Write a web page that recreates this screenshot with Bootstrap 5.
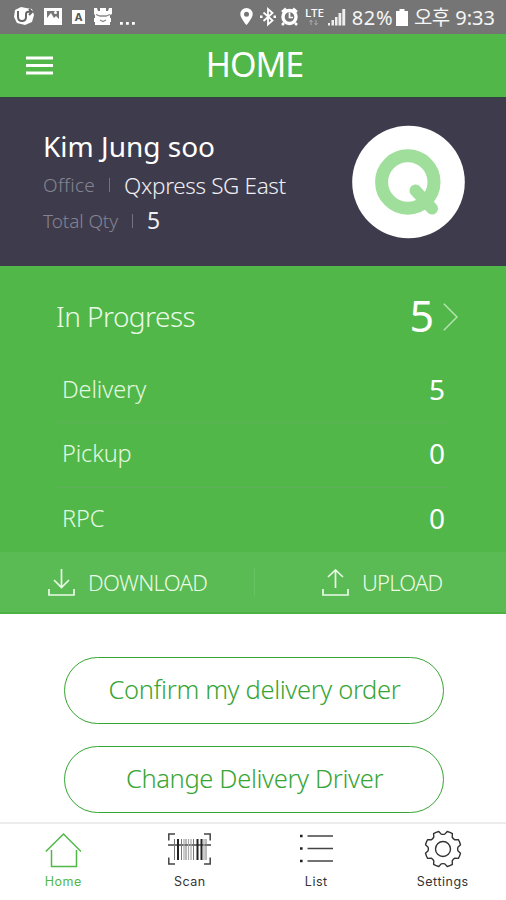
<!DOCTYPE html>
<html lang="en">
<head>
<meta charset="utf-8">
<meta name="viewport" content="width=device-width, initial-scale=1">
<title>Home</title>
<link href="https://cdn.jsdelivr.net/npm/bootstrap@5.3.0/dist/css/bootstrap.min.css" rel="stylesheet">
<style>
:root{--green:#50b748;--line-green:#37a534}
body{font-family:"Noto Sans","Noto Sans CJK KR",sans-serif;font-weight:340;background:#fff;line-height:1.2}
svg{display:block;flex:none}
.phone{width:506px;height:900px}
.status{height:34px;background:#757575;padding:2px 11px 0 13px;font-size:20px;font-weight:400;color:#f6f6f6}
.status svg{height:34px}
.topbar{height:63px;background:var(--green);padding:0 26px}
.topbar h1{font-size:34px;font-weight:400;letter-spacing:-1px;padding:0 24px 2px 0}
.profile{height:169px;background:#3e3c4c;border-top:1px solid #34433f;padding:0 41px 0 43px}
.who{font-size:28px;font-weight:400;height:40px;line-height:38px}
.info{height:36px;font-size:19px;color:#858391}
.info b{font-weight:340;color:#eeeef3}
.vr-thin{width:1px;height:14px;background:#74727f}
.progress-area{background:var(--green);color:#fff;height:286px}
.head-row{height:92px;padding:9px 48px 0 56px;font-size:28px}
.head-row .label{letter-spacing:-.55px;color:#eafae8}
.head-row .num{font-size:43px;font-weight:450;margin-right:9px;line-height:50px;padding-bottom:2px}
.rows{margin:0 58px 0 57px}
.item{height:64px;padding:0 3px 1px 5px;font-size:23.5px;letter-spacing:-.1px;color:#e4f7e1}
.item+.item{border-top:1px solid #5faf5b;height:65px;padding-bottom:3px}
.item .num{font-size:28px;font-weight:450;color:#fff}
.actions{height:62px;background:#5aba53;border-bottom:2px solid #4db245;color:#eafae8;font-size:22px}
.actions .divide{width:1px;height:28px;background:#68c462}
.pill{width:380px;height:67px;border:1px solid var(--line-green);color:var(--line-green);font-size:25.5px;letter-spacing:-.35px;font-weight:300;padding:0 0 2px 2px}
.tabs{height:78px;border-top:2px solid #ececec;background:#fff;font-family:Inter,sans-serif;font-size:12.5px;font-weight:400;letter-spacing:.5px;color:#333}
.tabs a{color:inherit;padding-top:5px}
.tabs .on{color:var(--green)}
.tabs span{line-height:18px;margin-top:4px}
</style>
</head>
<body>
<div class="phone d-flex flex-column overflow-hidden">
  <div class="status d-flex align-items-center">
    <svg width="22" viewBox="0 0 22 34"><path d="M2 9l6-3 5 1 6 1 2 6-2 7-7 3-8-2-3-6z" fill="#fff"/><path d="M5 10v6q0 4 4 4t4-4v-3q0-3 5-2M16 8l3 3-3 3" fill="none" stroke="#666" stroke-width="2"/></svg>
    <svg width="18" viewBox="0 0 18 34" style="margin-left:9px"><rect y="7" width="18" height="17" fill="#fff"/><path d="M3 10h12v8l-3-3-2 2-3-5-4 5z" fill="#777"/><circle cx="11.500" cy="11.500" r="1.500" fill="#fff"/></svg>
    <svg width="13" viewBox="0 0 13 34" style="margin-left:10px"><rect y="9" width="13" height="14" fill="#fff"/><text x="6.500" y="20" font-size="11" font-weight="700" text-anchor="middle" fill="#555">A</text></svg>
    <svg width="20" viewBox="0 0 20 34" style="margin-left:8px"><path d="M1 7h3l1 3h2V7h6v3h2l1-3h3v6l-2 1v3h1v4h-1v3H2v-3H1v-4h1v-3l-1-1z" fill="#fff"/><path d="M3 13.500l4 1.500h6l4-1.500M7 19l3 1.500 3-1.500" fill="none" stroke="#888" stroke-width="1.300"/></svg>
    <svg width="16" viewBox="0 0 16 34" style="margin-left:7px"><path d="M0 21h2.800v2.800H0zM6 21h2.800v2.800H6zM12 21h2.800v2.800H12z" fill="#fff"/></svg>
    <svg class="ms-auto" width="13" viewBox="0 0 13 34"><path d="M6.500 7a6.200 6.200 0 0 1 6.200 6.200C12.700 17 6.500 24 6.500 24S.3 17 .3 13.200A6.200 6.200 0 0 1 6.500 7zm0 3.700a2.500 2.500 0 1 0 0 5 2.500 2.500 0 0 0 0-5z" fill="#fff"/></svg>
    <svg width="16" viewBox="0 0 16 34" style="margin-left:7px"><path d="M3.500 11.500l9 8-4.500 4V8l4.500 4-9 8" fill="none" stroke="#fff" stroke-width="1.800"/><path d="M0 14.500h2.500v2.500H0zM13.500 14.500H16v2.500h-2.500z" fill="#fff"/></svg>
    <svg width="17" viewBox="0 0 17 34" style="margin-left:5px"><path d="M1 11l4-3.500M16 11l-4-3.500M3 22l-2 2M14 22l2 2" stroke="#fff" stroke-width="2.500"/><circle cx="8.500" cy="16" r="6.500" fill="none" stroke="#fff" stroke-width="3.400"/><path d="M8.500 11.500V16.500H12" fill="none" stroke="#fff" stroke-width="1.700"/></svg>
    <svg width="19" viewBox="0 0 19 34" style="margin-left:7px"><text x="0" y="15.500" font-size="11" font-weight="500" textLength="19" lengthAdjust="spacingAndGlyphs" fill="#fff">LTE</text><path d="M6 19v5M4.500 21L6 19l1.500 2M11 19v5M9.500 22l1.500 2 1.500-2" fill="none" stroke="#aaa"/></svg>
    <svg width="18" viewBox="0 0 18 34" style="margin-left:4px"><path d="M0 22h2v2.500H0zM3.500 19H6v5.500H3.500zM7 16h2.500v8.500H7zM10.500 12h2.800v12.500h-2.800zM14.300 8h2.900v16.500h-2.900z" fill="#eee"/></svg>
    <span style="margin-left:6px;letter-spacing:.6px;margin-right:-1px">82%</span>
    <svg width="12" viewBox="0 0 12 34" style="margin-left:4px"><path d="M3.500 8h5v2H12v15H0V10h3.500z" fill="#fff"/></svg>
    <span style="margin-left:6px;letter-spacing:-.8px">오후</span>
    <span style="margin-left:6px">9:33</span>
  </div>

  <header class="topbar d-flex align-items-center">
    <svg width="27" height="20" viewBox="0 0 27 20"><path d="M0 2h27M0 9.500h27M0 17h27" stroke="#fff" stroke-width="3"/></svg>
    <h1 class="m-0 text-white flex-fill text-center">HOME</h1>
  </header>

  <section class="profile d-flex justify-content-between">
    <div style="padding-top:29px">
      <div class="who text-white">Kim Jung soo</div>
      <div class="info d-flex align-items-center"><span style="letter-spacing:.3px">Office</span><i class="vr-thin" style="margin:0 14px 0 14px"></i><b style="font-size:22.5px;letter-spacing:-.35px">Qxpress SG East</b></div>
      <div class="info d-flex align-items-center"><span style="letter-spacing:-.1px">Total Qty</span><i class="vr-thin" style="margin:0 14px"></i><b style="font-size:23px;font-weight:450">5</b></div>
    </div>
    <svg width="114" height="114" viewBox="0 0 114 114" style="margin-top:27px"><circle cx="57.500" cy="57" r="56.300" fill="#fff"/><circle cx="56.800" cy="57" r="26.200" fill="none" stroke="#9fde9b" stroke-width="13"/><path d="M64.500 65.500L81 83.500" stroke="#9fde9b" stroke-width="12" stroke-linecap="round"/></svg>
  </section>

  <section class="progress-area">
    <div class="head-row d-flex align-items-center">
      <span class="label me-auto">In Progress</span><span class="num">5</span>
      <svg width="15" height="28" viewBox="0 0 15 28"><path d="M.8 .8L14 14 .8 27.200" fill="none" stroke="#b5e3b0" stroke-width="1.500"/></svg>
    </div>
    <div class="rows">
      <div class="item d-flex align-items-center justify-content-between"><span>Delivery</span><span class="num">5</span></div>
      <div class="item d-flex align-items-center justify-content-between"><span>Pickup</span><span class="num">0</span></div>
      <div class="item d-flex align-items-center justify-content-between"><span>RPC</span><span class="num">0</span></div>
    </div>
  </section>

  <div class="actions d-flex align-items-center">
    <div class="d-flex align-items-center" style="width:254px;padding-left:48px">
      <svg width="27" height="27" viewBox="0 0 27 27"><path d="M13.500 0v18M6 11l7.500 7.500L21 11M1 20v6h25v-6" fill="none" stroke="#eafae8" stroke-width="1.700"/></svg>
      <span style="margin-left:13px;letter-spacing:-.65px">DOWNLOAD</span>
    </div>
    <i class="divide"></i>
    <div class="d-flex align-items-center" style="padding-left:67px">
      <svg width="27" height="27" viewBox="0 0 27 27"><path d="M13.500 19V1M6 8l7.500-7L21 8M1 20v6h25v-6" fill="none" stroke="#eafae8" stroke-width="1.700"/></svg>
      <span style="margin-left:13px;letter-spacing:-.8px">UPLOAD</span>
    </div>
  </div>

  <main class="flex-fill d-flex flex-column align-items-center" style="padding:43px 0 0 1px;gap:22px">
    <button class="btn rounded-pill pill">Confirm my delivery order</button>
    <button class="btn rounded-pill pill">Change Delivery Driver</button>
  </main>

  <nav class="tabs row g-0 text-center">
    <a href="#" class="col text-decoration-none d-flex flex-column align-items-center on"><svg width="36" height="40" viewBox="0 0 36 40"><path d="M.8 22.500L18.500 5 36 22.500M6.500 21v16.500h25V21" fill="none" stroke="currentColor" stroke-width="1.500"/></svg><span>Home</span></a>
    <a href="#" class="col text-decoration-none d-flex flex-column align-items-center"><svg width="43" height="40" viewBox="0 0 43 40"><path d="M.8 11.500V5H7M36 5h6.200v6.500M.8 28.500V35H7M36 35h6.200v-6.500M0 16h43" fill="none" stroke="#444" stroke-width="1.500"/><path d="M6.500 10v21M13.500 10v21M18 10v21M25.500 10v21M38 10v21" stroke="#777" stroke-width="1"/><path d="M10 10v21M29.500 10v21M33.500 10v21" stroke="#222" stroke-width="2"/><path d="M16 10v21M20.500 10v21M23 10v21M36 10v21" stroke="#aaa" stroke-width="1.200"/></svg><span>Scan</span></a>
    <a href="#" class="col text-decoration-none d-flex flex-column align-items-center"><svg width="34" height="40" viewBox="0 0 34 40"><path d="M8.500 7H34M8.500 19.500H34M8.500 32H34" stroke="#444" stroke-width="1.300"/><path d="M1 5.700h2.600v2.600H1zM1 18.200h2.600v2.600H1zM1 30.700h2.600v2.600H1z" fill="#222"/></svg><span>List</span></a>
    <a href="#" class="col text-decoration-none d-flex flex-column align-items-center"><svg width="38" height="40" viewBox="-19 -20 38 40"><path d="M17.500-4.200L14.900-1.800Q14.300 0 14.900 1.800L17.500 4.200Q16.900 7 15.350 9.400L11.800 9.200Q10.100 10.100 9.200 11.800L9.400 15.350Q7 16.900 4.200 17.500L1.800 14.900Q0 14.300-1.800 14.900L-4.200 17.500Q-7 16.900-9.400 15.350L-9.200 11.800Q-10.100 10.100-11.800 9.200L-15.350 9.400Q-16.900 7-17.500 4.200L-14.900 1.800Q-14.300 0-14.900-1.800L-17.500-4.200Q-16.900-7-15.350-9.400L-11.800-9.200Q-10.100-10.100-9.200-11.800L-9.400-15.350Q-7-16.900-4.200-17.500L-1.800-14.900Q0-14.300 1.800-14.900L4.200-17.500Q7-16.900 9.400-15.350L9.200-11.800Q10.100-10.100 11.800-9.200L15.350-9.400Q16.900-7 17.500-4.200Z" fill="none" stroke="#333" stroke-width="1.400" stroke-linejoin="round"/><circle r="7.500" fill="none" stroke="#333" stroke-width="1.400"/></svg><span>Settings</span></a>
  </nav>
</div>
<script src="https://cdn.jsdelivr.net/npm/bootstrap@5.3.0/dist/js/bootstrap.bundle.min.js"></script>
</body>
</html>
